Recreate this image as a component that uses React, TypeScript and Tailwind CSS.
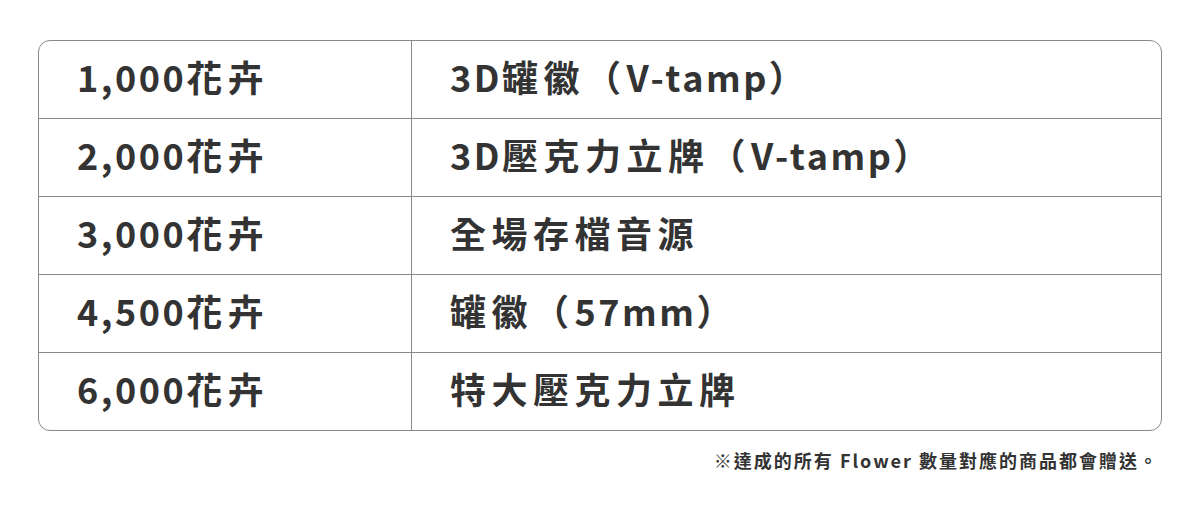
import React from "react";

const rows: [string, string][] = [
  ["1,000花卉", "3D罐徽（V-tamp）"],
  ["2,000花卉", "3D壓克力立牌（V-tamp）"],
  ["3,000花卉", "全場存檔音源"],
  ["4,500花卉", "罐徽（57mm）"],
  ["6,000花卉", "特大壓克力立牌"],
];

function Spaced({ text }: { text: string }) {
  const parts = text.match(/[\u3000-\u9fff\uff00-\uffef]+|[^\u3000-\u9fff\uff00-\uffef]+/g) || [];
  return (
    <>
      {parts.map((p, i) =>
        /[\u3000-\u9fff\uff00-\uffef]/.test(p) ? (
          <span key={i} className="tracking-[5.5px]">
            {p}
          </span>
        ) : (
          <span key={i} className="tracking-[2.5px]">
            {p}
          </span>
        )
      )}
    </>
  );
}

export default function App() {
  return (
    <div
      className="w-[1200px] h-[515px] bg-white pt-[40px] px-[38px]"
      style={{ fontFamily: '"Noto Sans CJK TC", "Noto Sans", sans-serif' }}
    >
      <div className="border border-[#8a8a8a] rounded-[12px] overflow-hidden">
        {rows.map(([a, b], i) => (
          <div
            key={i}
            className={`flex ${i > 0 ? "h-[78px] border-t border-[#8a8a8a]" : "h-[77px]"}`}
          >
            <div className="w-[373px] shrink-0 border-r border-[#8a8a8a] flex items-center pl-[38px] pb-[8px] text-[36px] font-bold text-[#333333] leading-none whitespace-nowrap">
              <Spaced text={a} />
            </div>
            <div className="flex-1 flex items-center pl-[38px] pb-[8px] text-[36px] font-bold text-[#333333] leading-none whitespace-nowrap">
              <Spaced text={b} />
            </div>
          </div>
        ))}
      </div>
      <div className="flex justify-end pr-[3px] mt-[16px] text-[18px] leading-[26px] font-bold text-[#333333] tracking-[2px]">
        ※達成的所有 Flower 數量對應的商品都會贈送。
      </div>
    </div>
  );
}
